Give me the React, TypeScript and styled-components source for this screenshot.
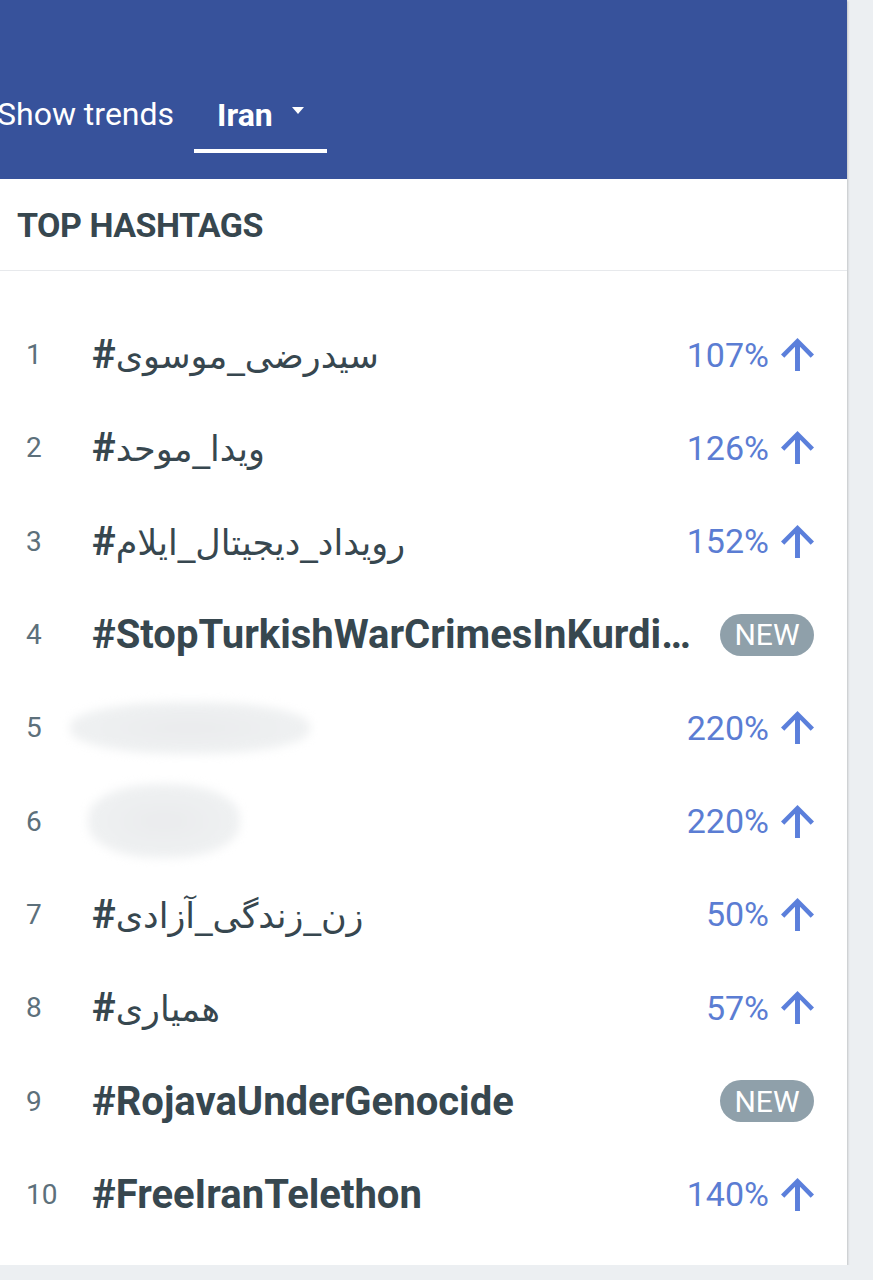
import React from "react";
import styled, { createGlobalStyle } from "styled-components";

const GlobalStyle = createGlobalStyle`
  html, body { margin: 0; padding: 0; }
  body {
    background: #eceff2;
    font-family: Roboto, "Liberation Sans", Arial, sans-serif;
    overflow: hidden;
  }
`;

const Card = styled.div`
  width: 847px;
  height: 1265px;
  background: #ffffff;
  box-shadow: 1px 1px 2px rgba(0, 0, 0, 0.18);
  display: flex;
  flex-direction: column;
`;

const Header = styled.header`
  height: 179px;
  background: #37529b;
  display: flex;
  align-items: flex-start;
  padding-top: 80px;
  box-sizing: border-box;
`;

const TrendLabel = styled.span`
  color: #ffffff;
  font-size: 32px;
  line-height: 69px;
  margin-left: -3px;
  margin-right: 20px;
`;

const Tab = styled.div`
  display: flex;
  align-items: center;
  height: 73px;
  box-sizing: border-box;
  padding: 0 23px;
  border-bottom: 4px solid #ffffff;
  color: #ffffff;
  font-size: 32px;
  font-weight: 700;
`;

const Caret = styled.span`
  width: 0;
  height: 0;
  margin-left: 19px;
  margin-bottom: 8px;
  border-left: 6.5px solid transparent;
  border-right: 6.5px solid transparent;
  border-top: 7px solid #ffffff;
`;

const SectionHead = styled.div`
  height: 92px;
  box-sizing: border-box;
  display: flex;
  align-items: center;
  padding-left: 17px;
  border-bottom: 1px solid #e7e9ec;
  color: #37474f;
  font-size: 34px;
  font-weight: 700;
  letter-spacing: -0.5px;
`;

const List = styled.ol`
  list-style: none;
  margin: 0;
  padding: 37px 0 0 0;
`;

const Row = styled.li`
  display: flex;
  align-items: center;
  height: 93.3px;
  padding: 0 33px 0 26px;
`;

const Rank = styled.span`
  width: 66px;
  flex: none;
  font-size: 28px;
  color: #5d707b;
`;

const Tag = styled.span`
  flex: 1;
  min-width: 0;
  white-space: nowrap;
  overflow: hidden;
  text-overflow: ellipsis;
  font-size: 40px;
  font-weight: 700;
  color: #37474f;
`;

const Persian = styled.span`
  font-family: "DejaVu Sans", "Noto Sans", sans-serif;
  font-weight: 400;
  font-size: 35px;
`;

const SmudgeCell = styled.span`
  flex: 1;
  min-width: 0;
  display: flex;
  align-items: center;
`;

const Smudge = styled.span<{ $w: number; $h: number; $dx: number }>`
  display: block;
  width: ${(p) => p.$w}px;
  height: ${(p) => p.$h}px;
  margin-left: ${(p) => p.$dx}px;
  border-radius: 45%;
  background: radial-gradient(ellipse at center, #eaebed 0%, #eef0f1 60%, #f4f5f6 100%);
  filter: blur(5px);
`;

const Trend = styled.span`
  flex: none;
  margin-left: 12px;
  display: flex;
  align-items: center;
  gap: 12px;
  color: #5b7dd3;
  font-size: 34px;
`;

const Badge = styled.span`
  flex: none;
  margin-left: 12px;
  width: 94px;
  height: 42px;
  border-radius: 21px;
  background: #8fa0aa;
  color: #ffffff;
  font-size: 30px;
  display: flex;
  align-items: center;
  justify-content: center;
`;

const ArrowUp = () => (
  <svg width="33" height="33" viewBox="4 4 16 16" fill="#5b7fdb">
    <path d="M4 12l1.6 1.6L10.8 8.3V20h2.4V8.3l5.2 5.3L20 12l-8-8-8 8z" />
  </svg>
);

type Item = {
  rank: number;
  tag?: string;
  fa?: string;
  smudge?: { w: number; h: number; dx: number };
  pct?: string;
};

const items: Item[] = [
  { rank: 1, fa: "سیدرضی_موسوی", pct: "107%" },
  { rank: 2, fa: "ویدا_موحد", pct: "126%" },
  { rank: 3, fa: "رویداد_دیجیتال_ایلام", pct: "152%" },
  { rank: 4, tag: "#StopTurkishWarCrimesInKurdistan" },
  { rank: 5, smudge: { w: 240, h: 52, dx: -22 }, pct: "220%" },
  { rank: 6, smudge: { w: 152, h: 74, dx: -4 }, pct: "220%" },
  { rank: 7, fa: "زن_زندگی_آزادی", pct: "50%" },
  { rank: 8, fa: "همیاری", pct: "57%" },
  { rank: 9, tag: "#RojavaUnderGenocide" },
  { rank: 10, tag: "#FreeIranTelethon", pct: "140%" },
];

export default function App() {
  return (
    <>
      <GlobalStyle />
      <Card>
        <Header>
          <TrendLabel>Show trends</TrendLabel>
          <Tab>
            Iran
            <Caret />
          </Tab>
        </Header>
        <SectionHead>TOP HASHTAGS</SectionHead>
        <List>
          {items.map((it) => (
            <Row key={it.rank}>
              <Rank>{it.rank}</Rank>
              {it.smudge ? (
                <SmudgeCell>
                  <Smudge $w={it.smudge.w} $h={it.smudge.h} $dx={it.smudge.dx} />
                </SmudgeCell>
              ) : (
                <Tag>
                  {it.fa ? (
                    <>
                      #<Persian>{it.fa}</Persian>
                    </>
                  ) : (
                    it.tag
                  )}
                </Tag>
              )}
              {it.pct ? (
                <Trend>
                  {it.pct}
                  <ArrowUp />
                </Trend>
              ) : (
                <Badge>NEW</Badge>
              )}
            </Row>
          ))}
        </List>
      </Card>
    </>
  );
}
